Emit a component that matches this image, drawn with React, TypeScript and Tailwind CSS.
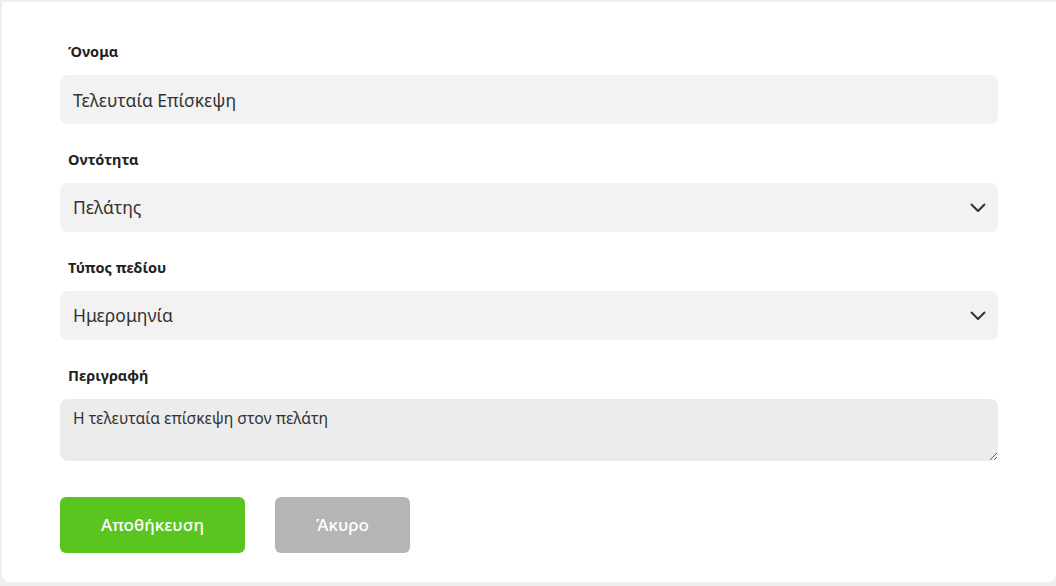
import { useState } from 'react';

const font = { fontFamily: '"Noto Sans", "Open Sans", sans-serif' };

function Chevron() {
  return (
    <svg width="16" height="10" viewBox="0 0 16 10" fill="none" className="text-[#333]">
      <path d="M1.5 1.5 8 8l6.5-6.5" stroke="currentColor" strokeWidth="2" strokeLinecap="round" strokeLinejoin="round" />
    </svg>
  );
}

function Label({ children }: { children: React.ReactNode }) {
  return <div className="h-5 pl-[8px] text-[14.5px] leading-5 font-bold text-[#222]">{children}</div>;
}

function SelectBox({ value }: { value: string }) {
  return (
    <div className="mt-[14px] flex h-[49px] items-center justify-between rounded-lg bg-[#f2f2f2] pl-[13px] pr-[12px] text-[17.5px] text-[#333]">
      <span>{value}</span>
      <Chevron />
    </div>
  );
}

export default function App() {
  const [name, setName] = useState('Τελευταία Επίσκεψη');
  const [desc, setDesc] = useState('Η τελευταία επίσκεψη στον πελάτη');

  return (
    <div className="min-h-[586px] bg-[#efefef] pl-[2px] pt-[2px] pb-[4px]" style={font}>
      <div className="h-[580px] rounded-b-lg bg-white pl-[58px] pr-[58px] pt-[39px]">
        <Label>Όνομα</Label>
        <input
          value={name}
          onChange={(e) => setName(e.target.value)}
          className="mt-[14px] block h-[49px] w-full rounded-lg bg-[#f2f2f2] px-[13px] text-[17.5px] text-[#333] outline-none"
        />

        <div className="mt-[25px]">
          <Label>Οντότητα</Label>
          <SelectBox value="Πελάτης" />
        </div>

        <div className="mt-[25px]">
          <Label>Τύπος πεδίου</Label>
          <SelectBox value="Ημερομηνία" />
        </div>

        <div className="mt-[25px]">
          <Label>Περιγραφή</Label>
          <textarea
            value={desc}
            onChange={(e) => setDesc(e.target.value)}
            className="mt-[14px] block h-[62px] w-full rounded-lg bg-[#ececec] px-[13px] pt-[9px] text-[15.7px] leading-5 text-[#333] outline-none"
          />
        </div>

        <div className="mt-[36px] flex gap-[30px]">
          <button className="h-[56px] w-[185px] rounded-md bg-[#5bc520] text-[17px] font-medium text-white">
            Αποθήκευση
          </button>
          <button className="h-[56px] w-[135px] rounded-md bg-[#b5b5b5] text-[17px] font-medium text-white">
            Άκυρο
          </button>
        </div>
      </div>
    </div>
  );
}
